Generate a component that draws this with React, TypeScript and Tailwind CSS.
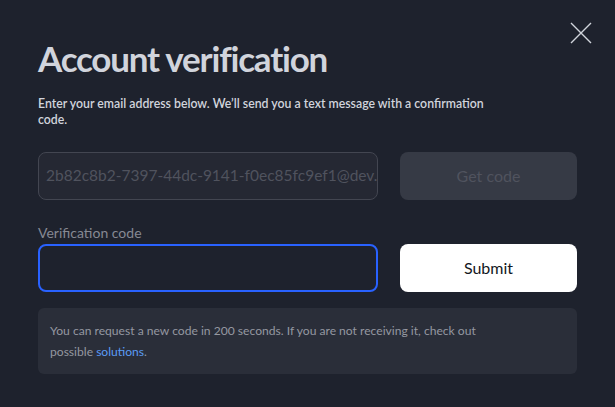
import React from 'react';

const font = { fontFamily: 'Lato, "Noto Sans", sans-serif' };

export default function App() {
  return (
    <div
      className="relative w-[615px] h-[407px] overflow-hidden bg-[#1e222d] px-[38px] pt-[38px] text-[#d1d4dc]"
      style={font}
    >
      {/* close */}
      <button className="absolute right-[23px] top-[22px] w-[22px] h-[22px] text-[#d1d4dc]" aria-label="Close">
        <svg viewBox="0 0 22 22" width="22" height="22" fill="none" stroke="currentColor" strokeWidth="1.4">
          <path d="M1 1l20 20M21 1L1 21" />
        </svg>
      </button>

      <h1 className="text-[35px] leading-[40px] font-bold tracking-[-1.2px]">Account verification</h1>

      <p className="mt-[18px] max-w-[470px] text-[12.3px] leading-[16px] font-semibold">
        Enter your email address below. We’ll send you a text message with a confirmation code.
      </p>

      <div className="mt-[24px] flex gap-[22px]">
        <div className="w-[340px] h-[48px] rounded-[8px] border border-[#434651] bg-[#252833] overflow-hidden flex items-center">
          <input
            disabled
            value="2b82c8b2-7397-44dc-9141-f0ec85fc9ef1@dev.com"
            readOnly
            className="w-full bg-transparent pl-[7px] text-[15.5px] text-[#50535e] outline-none"
            style={font}
          />
        </div>
        <button
          disabled
          className="flex-1 h-[48px] rounded-[8px] bg-[#363a45] text-[16px] text-[#50535e]"
          style={font}
        >
          Get code
        </button>
      </div>

      <label className="block mt-[24px] text-[14px] leading-[18px] text-[#868993]">Verification code</label>

      <div className="mt-[2px] flex gap-[22px]">
        <input
          className="w-[340px] h-[48px] rounded-[8px] border-2 border-[#2962ff] bg-transparent px-[10px] text-[16px] text-[#d1d4dc] outline-none"
          style={font}
        />
        <button className="flex-1 h-[48px] rounded-[8px] bg-white text-[16px] text-[#131722]" style={font}>
          Submit
        </button>
      </div>

      <div className="mt-[16px] rounded-[6px] bg-[#2a2e39] px-[12px] py-[12px] text-[12.1px] leading-[21px] text-[#9598a1]">
        You can request a new code in 200 seconds. If you are not receiving it, check out
        <br />
        possible <a className="text-[#5b9cf6]" href="#">solutions</a>.
      </div>
    </div>
  );
}
